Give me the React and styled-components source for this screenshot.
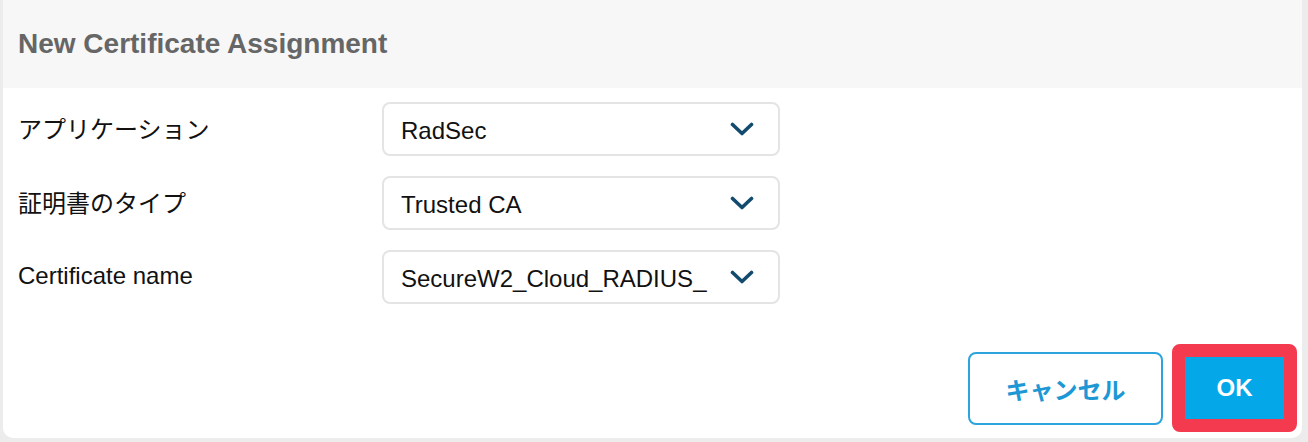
import { Fragment } from "react";
import styled, { createGlobalStyle } from "styled-components";

const GlobalStyle = createGlobalStyle`
  html, body {
    margin: 0;
    padding: 0;
    background: #ececec;
  }
  body {
    font-family: "Liberation Sans", "Noto Sans CJK JP", Arial, sans-serif;
  }
`;

const Dialog = styled.div`
  margin-left: 3px;
  width: 1299px;
  height: 438px;
  background: #fff;
  border-radius: 0 0 10px 10px;
  display: flex;
  flex-direction: column;
  overflow: hidden;
`;

const Header = styled.div`
  height: 88px;
  background: #f7f7f7;
  display: flex;
  align-items: center;
  padding: 0 15px;
`;

const Title = styled.h1`
  margin: 0;
  font-size: 28px;
  font-weight: 700;
  color: #666;
`;

const Form = styled.div`
  display: grid;
  grid-template-columns: 364px 398px;
  grid-auto-rows: 54px;
  row-gap: 20px;
  align-items: center;
  padding: 14px 15px 0;
`;

const Label = styled.div`
  font-size: 24px;
  color: #111;
  margin-top: -3px;
`;

const SelectBox = styled.div`
  height: 100%;
  box-sizing: border-box;
  border: 2px solid #e4e4e4;
  border-radius: 8px;
  display: flex;
  align-items: center;
  padding: 0 24px 0 17px;
  gap: 20px;
`;

const SelectText = styled.span`
  flex: 1;
  font-size: 24px;
  color: #111;
  white-space: nowrap;
  overflow: hidden;
  padding-top: 4px;
`;

const Footer = styled.div`
  margin-top: auto;
  display: flex;
  justify-content: flex-end;
  align-items: center;
  gap: 9px;
  padding: 0 5px 6px;
`;

const CancelButton = styled.button`
  width: 195px;
  height: 73px;
  background: #fff;
  border: 2px solid #2ea4dd;
  border-radius: 8px;
  color: #1d98d5;
  font-family: inherit;
  font-size: 24px;
  font-weight: 700;
`;

const Highlight = styled.div`
  border: 13px solid #f43a4f;
  border-radius: 8px;
  display: flex;
`;

const OkButton = styled.button`
  width: 99px;
  height: 62px;
  background: #04a8e9;
  border: none;
  color: #fff;
  font-family: inherit;
  font-size: 24px;
  font-weight: 700;
`;

const Chevron = () => (
  <svg width="24" height="14" viewBox="0 0 24 14" fill="none">
    <polyline
      points="2.5,2.5 12,11.5 21.5,2.5"
      stroke="#134b6f"
      strokeWidth="3.6"
      strokeLinecap="round"
      strokeLinejoin="round"
    />
  </svg>
);

const fields = [
  { label: "アプリケーション", value: "RadSec" },
  { label: "証明書のタイプ", value: "Trusted CA" },
  { label: "Certificate name", value: "SecureW2_Cloud_RADIUS_" },
];

const App = () => {
  return (
    <>
      <GlobalStyle />
      <Dialog>
        <Header>
          <Title>New Certificate Assignment</Title>
        </Header>
        <Form>
          {fields.map((f) => (
            <Fragment key={f.label}>
              <Label>{f.label}</Label>
              <SelectBox>
                <SelectText>{f.value}</SelectText>
                <Chevron />
              </SelectBox>
            </Fragment>
          ))}
        </Form>
        <Footer>
          <CancelButton>キャンセル</CancelButton>
          <Highlight>
            <OkButton>OK</OkButton>
          </Highlight>
        </Footer>
      </Dialog>
    </>
  );
};

export default App;
